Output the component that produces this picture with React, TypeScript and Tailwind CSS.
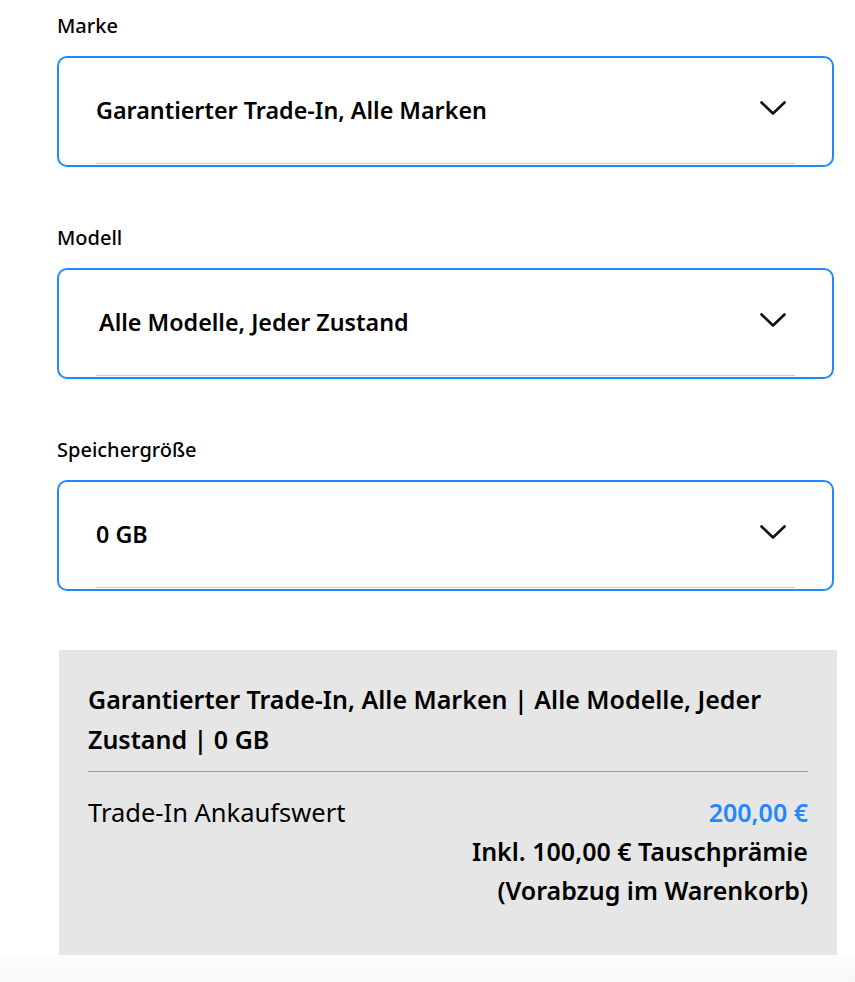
import React from "react";

type Field = { label: string; value: string; indent: string };

const FIELDS: Field[] = [
  { label: "Marke", value: "Garantierter Trade-In, Alle Marken", indent: "pl-[37px]" },
  { label: "Modell", value: "Alle Modelle, Jeder Zustand", indent: "pl-[40px]" },
  { label: "Speichergröße", value: "0 GB", indent: "pl-[37px]" },
];

function Chevron() {
  return (
    <svg width="28" height="16" viewBox="0 0 28 16" fill="none" className="mb-[6px] shrink-0">
      <path d="M2.5 2.5 14 13.5 25.5 2.5" stroke="#111" strokeWidth="2.6" strokeLinecap="round" strokeLinejoin="round" />
    </svg>
  );
}

function SelectField({ field }: { field: Field }) {
  return (
    <div>
      <div className="text-[20px] leading-[24px] font-medium text-black mb-[18px]">{field.label}</div>
      <div className="h-[111px] w-[777px] rounded-[10px] border-2 border-[#2189ff] bg-white flex flex-col">
        <div className={`flex-1 flex items-center justify-between ${field.indent} pr-[45px]`}>
          <span className="text-[23.3px] font-semibold text-black">{field.value}</span>
          <Chevron />
        </div>
        <div className="mx-[37px] h-px bg-[#cfcfcf] mb-[1px]" />
      </div>
    </div>
  );
}

export default function App() {
  return (
    <div className="min-h-[982px] bg-white flex flex-col font-['Noto_Sans',sans-serif] text-black">
      <div className="pl-[57px] pt-[14px] flex flex-col gap-[59px]">
        {FIELDS.map((f) => (
          <SelectField key={f.label} field={f} />
        ))}

        {/* Summary */}
        <div className="ml-[2px] w-[778px] bg-[#e6e6e6] px-[29px] pt-[29px] pb-[45px]">
          <p className="text-[25px] leading-[40px] font-semibold">
            Garantierter Trade-In, Alle Marken | Alle Modelle, Jeder Zustand | 0 GB
          </p>
          <div className="h-px bg-[#9a9a9a] mt-[12px]" />
          <div className="flex justify-between mt-[21px] text-[25px] leading-[39px]">
            <span className="font-normal text-[25.5px]">Trade-In Ankaufswert</span>
            <div className="text-right">
              <div className="font-semibold text-[#2189ff]">200,00 €</div>
              <div className="font-semibold">Inkl. 100,00 € Tauschprämie</div>
              <div className="font-semibold">(Vorabzug im Warenkorb)</div>
            </div>
          </div>
        </div>
      </div>
      <div className="mt-auto h-[29px] bg-gradient-to-b from-[#fdfdfd] to-[#f7f7f7]" />
    </div>
  );
}
